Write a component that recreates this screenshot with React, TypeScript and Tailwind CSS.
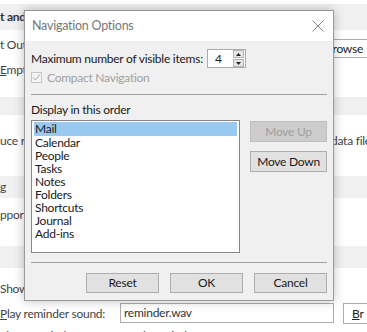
import React from "react";

const font = { fontFamily: 'Lato, "Noto Sans", Arial, sans-serif' };

function Btn({ children, disabled, className = "" }: { children: React.ReactNode; disabled?: boolean; className?: string }) {
  return (
    <div
      className={
        "flex items-center justify-center border text-[12px] leading-none " +
        (disabled ? "border-[#bfbfbf] bg-[#cccccc] text-[#a0a0a0] " : "border-[#adadad] bg-[#e1e1e1] text-[#1a1a1a] ") +
        className
      }
    >
      {children}
    </div>
  );
}

export default function App() {
  const items = ["Mail", "Calendar", "People", "Tasks", "Notes", "Folders", "Shortcuts", "Journal", "Add-ins"];
  return (
    <div className="relative w-[367px] h-[332px] overflow-hidden bg-white text-[#444] text-[12px] tracking-[-0.25px]" style={font}>
      {/* background page */}
      <div className="flex flex-col">
        <div className="h-[4px]" />
        <div className="h-[26px] bg-[#f0f0f0] flex items-center font-bold text-[#333]">t and</div>
        <div className="h-[67px] relative">
          <div className="absolute left-0 top-[6px]">t Out</div>
          <div className="absolute left-0 top-[31px]"><span className="underline">E</span>mpt</div>
          <div className="absolute left-[321px] top-[9px] w-[60px] h-[19px] border border-[#adadad] bg-white text-[#222] flex items-center pl-[3px]"><span className="underline">B</span>rowse</div>
        </div>
        <div className="h-[18px] bg-[#f0f0f0]" />
        <div className="h-[61px] relative">
          <div className="absolute left-0 top-[17px]">uce r</div>
          <div className="absolute left-[331px] top-[17px] whitespace-nowrap">data file</div>
        </div>
        <div className="h-[22px] bg-[#f0f0f0] flex items-center">g</div>
        <div className="h-[48px] relative">
          <div className="absolute left-0 top-[8px]">ppor</div>
        </div>
        <div className="h-[22px] bg-[#f0f0f0]" />
        <div className="h-[64px] relative">
          <div className="absolute left-0 top-[12px]">Show</div>
          <div className="absolute left-0 top-[37px] whitespace-nowrap"><span className="underline">P</span>lay reminder sound:</div>
          <div className="absolute left-[120px] top-[35px] w-[214px] h-[20px] border border-[#acacac] bg-white text-[#333] flex items-center pl-[3px]">reminder.wav</div>
          <div className="absolute left-[343px] top-[35px] w-[40px] h-[21px] border border-[#adadad] bg-white text-[#222] flex items-center pl-[8px]"><span className="underline">B</span>r</div>
          <div className="absolute left-0 top-[59px] whitespace-nowrap">Show reminders on top of other windows</div>
        </div>
      </div>

      {/* dialog */}
      <div className="absolute left-[24px] top-[10px] w-[310px] h-[291px] border border-[#9a9a9a] bg-[#f0f0f0] flex flex-col shadow-[0_0_10px_rgba(0,0,0,0.25)] text-[#1a1a1a]">
        <div className="h-[30px] bg-white flex items-center justify-between pl-[7px] pr-[8px] shrink-0">
          <span className="text-[12.5px] text-[#777]">Navigation Options</span>
          <svg width="12" height="12" viewBox="0 0 12 12" className="mr-[1px]">
            <path d="M0.5 0.5 L11.5 11.5 M11.5 0.5 L0.5 11.5" stroke="#8a8a8a" strokeWidth="1" fill="none" />
          </svg>
        </div>
        <div className="flex flex-col px-[6px] pt-[8px]">
          <div className="flex items-center h-[19px]">
            <span className="whitespace-nowrap">Maximum number of visible items:</span>
            <div className="ml-[4px] w-[39px] h-[19px] border border-[#acacac] bg-white flex items-center">
              <span className="pl-[7px] flex-1">4</span>
              <div className="w-[11px] h-[17px] flex flex-col mr-[1px] gap-[1px]">
                <div className="flex-1 bg-[#e5e5e5] border border-[#b5b5b5] flex items-center justify-center">
                  <svg width="5" height="3" viewBox="0 0 5 3"><path d="M0 3 L2.5 0 L5 3Z" fill="#222" /></svg>
                </div>
                <div className="flex-1 bg-[#e5e5e5] border border-[#b5b5b5] flex items-center justify-center">
                  <svg width="5" height="3" viewBox="0 0 5 3"><path d="M0 0 L2.5 3 L5 0Z" fill="#222" /></svg>
                </div>
              </div>
            </div>
          </div>
          <div className="flex items-center mt-[2px] h-[15px]">
            <div className="w-[11px] h-[11px] border border-[#c4c4c4] bg-[#f4f4f4] flex items-center justify-center">
              <svg width="9" height="9" viewBox="0 0 9 9"><path d="M1 4.5 L3.5 7 L8 1.5" stroke="#a8a8a8" strokeWidth="1" fill="none" /></svg>
            </div>
            <span className="ml-[5px] text-[#a0a0a0]">Compact Navigation</span>
          </div>
          <div className="mt-[9px] h-[1px] bg-[#a0a0a0]" />
          <div className="mt-[8px] leading-[14px]">Display in this order</div>
          <div className="flex mt-[3px]">
            <div className="w-[209px] h-[133px] border border-[#828790] bg-white pt-[1px] px-[2px] flex flex-col">
              {items.map((it, i) => (
                <div
                  key={it}
                  className={"h-[13px] leading-[13px] pl-[1px] " + (i === 0 ? "bg-[#99c9ef] h-[14px] leading-[14px]" : "")}
                >
                  {it}
                </div>
              ))}
            </div>
            <div className="flex flex-col ml-[10px] pt-[1px] gap-[9px]">
              <Btn disabled className="w-[77px] h-[21px]">Move Up</Btn>
              <Btn className="w-[77px] h-[21px]">Move Down</Btn>
            </div>
          </div>
          <div className="mt-[9px] h-[1px] bg-[#a0a0a0]" />
          <div className="flex justify-end gap-[11px] mt-[10px]">
            <Btn className="w-[73px] h-[20px]">Reset</Btn>
            <Btn className="w-[73px] h-[20px]">OK</Btn>
            <Btn className="w-[73px] h-[20px]">Cancel</Btn>
          </div>
        </div>
      </div>
    </div>
  );
}
